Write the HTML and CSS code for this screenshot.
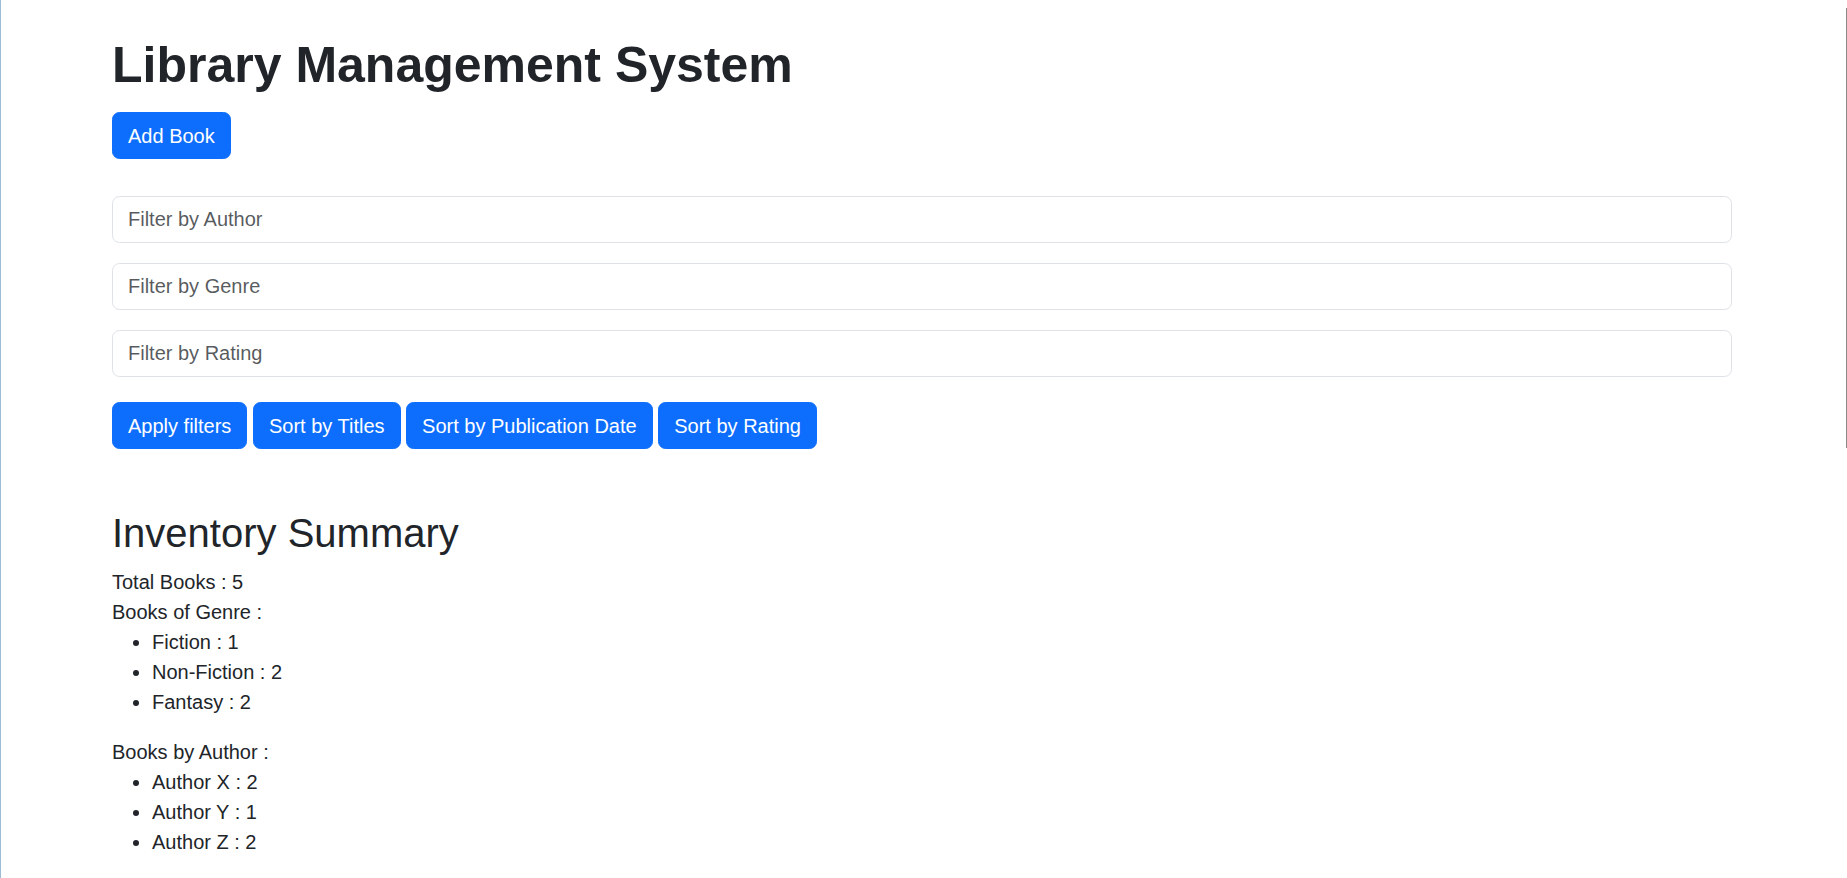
FILE: index.html
```html
<!DOCTYPE html>
<html lang="en">
<head>
<meta charset="utf-8">
<title>Library Management System</title>
<link rel="stylesheet" href="styles.css">
</head>
<body>
<div class="container">
  <h1 class="title">Library Management System</h1>
  <div class="add-row">
    <button class="btn">Add Book</button>
  </div>
  <div class="filters">
    <input class="field" type="text" placeholder="Filter by Author">
    <input class="field" type="text" placeholder="Filter by Genre">
    <input class="field" type="text" placeholder="Filter by Rating">
  </div>
  <div class="actions">
    <button class="btn">Apply filters</button>
    <button class="btn">Sort by Titles</button>
    <button class="btn">Sort by Publication Date</button>
    <button class="btn">Sort by Rating</button>
  </div>
  <h2 class="summary-title">Inventory Summary</h2>
  <div class="line">Total Books : 5</div>
  <div class="line">Books of Genre :</div>
  <ul class="list">
    <li>Fiction : 1</li>
    <li>Non-Fiction : 2</li>
    <li>Fantasy : 2</li>
  </ul>
  <div class="line">Books by Author :</div>
  <ul class="list">
    <li>Author X : 2</li>
    <li>Author Y : 1</li>
    <li>Author Z : 2</li>
  </ul>
</div>
<div class="scroll-thumb"></div>
</body>
</html>
```
FILE: styles.css
```css
html, body {
  margin: 0;
  padding: 0;
  background: #ffffff;
}
body {
  border-left: 1px solid #9dbcd6;
  font-family: "Liberation Sans", Arial, sans-serif;
  font-size: 20px;
  line-height: 30px;
  color: #212529;
  min-height: 878px;
  box-sizing: border-box;
}
.container {
  width: 1620px;
  margin-left: 111px;
  padding-top: 35px;
}
.title {
  margin: 0 0 17px 0;
  font-size: 50px;
  line-height: 60px;
  font-weight: 700;
  color: #212529;
}
.add-row {
  margin-bottom: 36.5px;
}
.btn {
  display: inline-block;
  font-family: "Liberation Sans", Arial, sans-serif;
  font-size: 20px;
  line-height: 30px;
  padding: 7.5px 15px;
  border: 1px solid #0d6efd;
  border-radius: 7.5px;
  background: #0d6efd;
  color: #ffffff;
  margin: 0;
  vertical-align: middle;
  cursor: pointer;
}
.filters {
  display: flex;
  flex-direction: column;
  gap: 19.5px;
}
.field {
  display: block;
  box-sizing: border-box;
  width: 100%;
  height: 47.5px;
  padding: 7.5px 15px;
  font-family: "Liberation Sans", Arial, sans-serif;
  font-size: 20px;
  line-height: 30px;
  color: #212529;
  border: 1px solid #dee2e6;
  border-radius: 7.5px;
  background: #ffffff;
  margin: 0;
  outline: none;
}
.field::placeholder {
  color: rgba(33, 37, 41, 0.75);
}
.actions {
  margin-top: 25px;
}
.summary-title {
  margin: 60px 0 10px 0;
  font-size: 40px;
  line-height: 48px;
  font-weight: 400;
}
.line {
  line-height: 30px;
}
.list {
  margin: 0 0 20px 0;
  padding-left: 40px;
}
.list li {
  line-height: 30px;
}
.scroll-thumb {
  position: fixed;
  right: 0;
  top: 8px;
  width: 1px;
  height: 440px;
  background: #8a8a8a;
}
```
